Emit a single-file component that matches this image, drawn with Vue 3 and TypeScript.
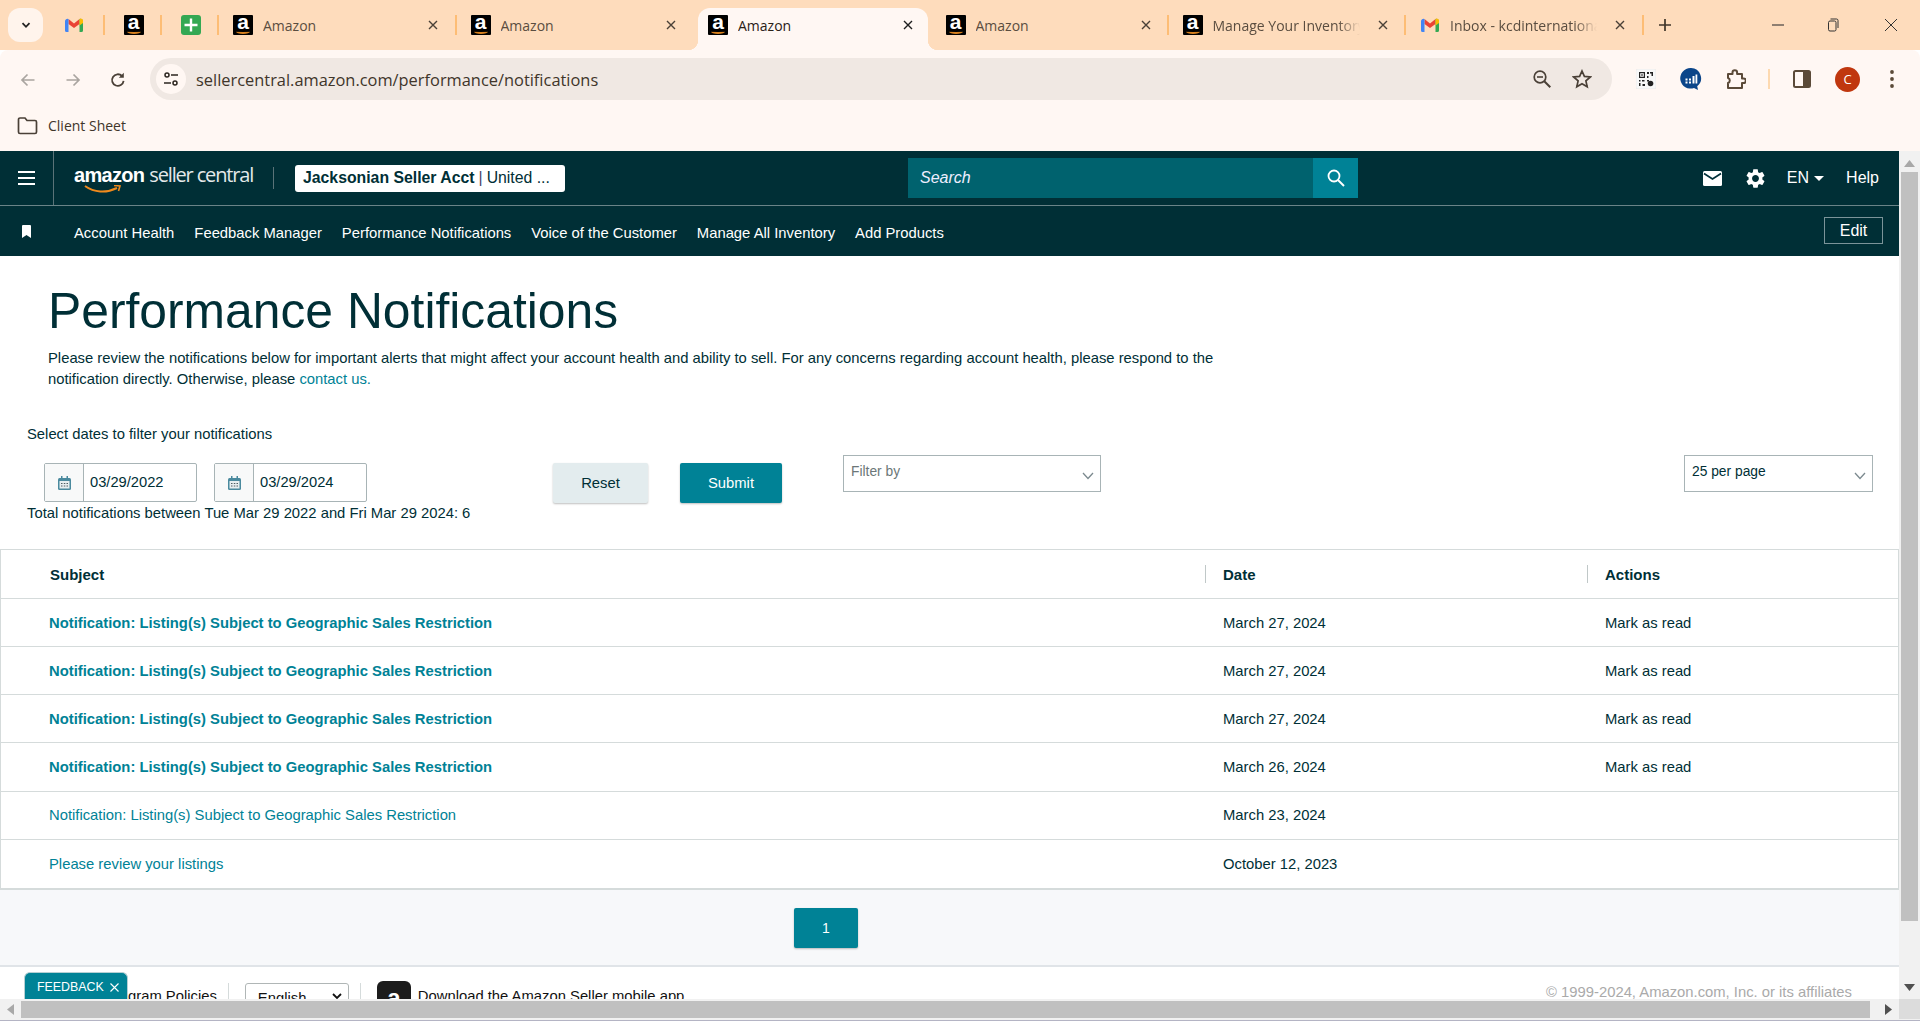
<script setup lang="ts">
interface Tab { kind: string; title?: string; active?: boolean; fade?: boolean }
const tabs: Tab[] = [
  { kind: 'amazon', title: 'Amazon' },
  { kind: 'amazon', title: 'Amazon' },
  { kind: 'amazon', title: 'Amazon', active: true },
  { kind: 'amazon', title: 'Amazon' },
  { kind: 'amazon', title: 'Manage Your Inventory', fade: true },
  { kind: 'gmail', title: 'Inbox - kcdinternational', fade: true },
]
const navLinks = ['Account Health', 'Feedback Manager', 'Performance Notifications', 'Voice of the Customer', 'Manage All Inventory', 'Add Products']
const subject = 'Notification: Listing(s) Subject to Geographic Sales Restriction'
const rows = [
  { subject, date: 'March 27, 2024', action: 'Mark as read', unread: true },
  { subject, date: 'March 27, 2024', action: 'Mark as read', unread: true },
  { subject, date: 'March 27, 2024', action: 'Mark as read', unread: true },
  { subject, date: 'March 26, 2024', action: 'Mark as read', unread: true },
  { subject, date: 'March 23, 2024', action: '', unread: false },
  { subject: 'Please review your listings', date: 'October 12, 2023', action: '', unread: false },
]
const dates = ['03/29/2022', '03/29/2024']
</script>

<template>
  <div class="root">
    <div class="tabstrip">
      <div class="tabmenu">
        <svg width="12" height="12" viewBox="0 0 12 12"><path d="M2.5 4.2 6 7.8l3.5-3.6" fill="none" stroke="#222" stroke-width="1.8" /></svg>
      </div>
      <div class="pinned first">
        <svg class="fav" viewBox="0 0 20 20"><path d="M4.500 4 10 8.500 15.500 4v5L10 13 4.500 9z" fill="#ea4335" /><path d="M1 6.500A2.500 2.500 0 0 1 4.500 4v13H2.500A1.500 1.500 0 0 1 1 15.500z" fill="#4285f4" /><path d="M19 6.500A2.500 2.500 0 0 0 15.500 4v13h2a1.500 1.500 0 0 0 1.500-1.500z" fill="#34a853" /><path d="M15.500 4A2.300 2.300 0 0 1 19 6.500v1.500L15.500 10.500z" fill="#fbbc04" /></svg>
      </div>
      <div class="pinned">
        <div class="amz"><span>a</span><i></i></div>
      </div>
      <div class="pinned">
        <svg class="fav" viewBox="0 0 20 20"><rect width="20" height="20" rx="3" fill="#34a853" /><path d="M8.800 3.500h2.400v5.300h5.300v2.400h-5.300v5.300H8.800v-5.300H3.500V8.800h5.300z" fill="#fff" /></svg>
      </div>
      <div v-for="(t, i) in tabs" :key="i" class="tab" :class="{ active: t.active, afteractive: i === 3, beforeactive: i === 1 }">
        <div v-if="t.kind === 'amazon'" class="amz"><span>a</span><i></i></div>
        <svg v-else class="fav" viewBox="0 0 20 20"><path d="M4.500 4 10 8.500 15.500 4v5L10 13 4.500 9z" fill="#ea4335" /><path d="M1 6.500A2.500 2.500 0 0 1 4.500 4v13H2.500A1.500 1.500 0 0 1 1 15.500z" fill="#4285f4" /><path d="M19 6.500A2.500 2.500 0 0 0 15.500 4v13h2a1.500 1.500 0 0 0 1.500-1.500z" fill="#34a853" /><path d="M15.500 4A2.300 2.300 0 0 1 19 6.500v1.500L15.500 10.500z" fill="#fbbc04" /></svg>
        <span class="tabtitle" :class="{ fade: t.fade }">{{ t.title }}</span>
        <svg class="tabx" width="10" height="10" viewBox="0 0 10 10"><path d="M1 1l8 8M9 1 1 9" stroke="currentColor" stroke-width="1.4" /></svg>
      </div>
      <svg class="plus" width="14" height="14" viewBox="0 0 14 14"><path d="M7 1v12M1 7h12" stroke="#40352a" stroke-width="1.7" /></svg>
      <div class="winctl">
        <svg class="w-min" width="14" height="14" viewBox="0 0 14 14"><path d="M1 7h12" stroke="#333" stroke-width="1.1" /></svg>
        <svg class="w-rest" width="14" height="14" viewBox="0 0 14 14"><rect x="2.500" y="3" width="7.500" height="10" rx="1.500" fill="none" stroke="#333" /><path d="M4.500 1H10.500A1.500 1.500 0 0 1 12 2.500V10" fill="none" stroke="#333" /></svg>
        <svg width="14" height="14" viewBox="0 0 14 14"><path d="M1 1l12 12M13 1 1 13" stroke="#333" stroke-width="1" /></svg>
      </div>
    </div>

    <div class="toolbar">
      <svg class="tb back" viewBox="0 0 18 18"><path d="M15.500 9H3M8.500 3.500 3 9l5.500 5.500" fill="none" stroke="#aaa5a0" stroke-width="1.7" /></svg>
      <svg class="tb" viewBox="0 0 18 18"><path d="M2.500 9H15M9.500 3.500 15 9l-5.500 5.500" fill="none" stroke="#aaa5a0" stroke-width="1.7" /></svg>
      <svg class="tb" viewBox="0 0 18 18"><path d="M14.600 9.800A5.800 5.800 0 1 1 13 5" fill="none" stroke="#4a4037" stroke-width="1.8" /><path d="M14.800 1.800v5h-5z" fill="#4a4037" /></svg>
      <div class="omni">
        <div class="siteinfo">
          <svg width="16" height="16" viewBox="0 0 16 16"><circle cx="4" cy="4" r="2" fill="none" stroke="#2c2620" stroke-width="1.5" /><path d="M8 4h7M1 12h7" stroke="#2c2620" stroke-width="1.6" /><circle cx="12" cy="12" r="2" fill="none" stroke="#2c2620" stroke-width="1.5" /></svg>
        </div>
        <span class="url">sellercentral.amazon.com/performance/notifications</span>
        <svg class="omnizoom" width="20" height="20" viewBox="0 0 20 20"><circle cx="8" cy="8" r="5.800" fill="none" stroke="#4a4037" stroke-width="1.7" /><path d="M5 8h6" stroke="#4a4037" stroke-width="1.6" /><path d="m12.300 12.300 6 6" stroke="#4a4037" stroke-width="2" /></svg>
        <svg class="omnistar" width="20" height="20" viewBox="0 0 20 20"><path d="m10 2 2.400 5.400 5.900.6-4.400 3.900 1.300 5.800L10 14.700l-5.200 3 1.300-5.800L1.700 8l5.900-.6z" fill="none" stroke="#4a4037" stroke-width="1.7" /></svg>
      </div>
      <div class="exts">
        <svg class="ext e-qr" width="20" height="20" viewBox="0 0 20 20"><rect width="20" height="20" rx="2" fill="#f8f8f8" stroke="#e6e6e6" stroke-width=".6" /><path d="M3 3h6v6H3zM4.200 4.200v3.600h3.600V4.200zM5.300 5.300h1.400v1.400H5.300zM11 3h2v2h-2zM14 3h3v4h-1.500V4.500H14zM11 7h1.500v2H11zM3 11h1.500v1.500H3zM6 11h2.500v1.500H6zM3 14h1.500v3H3zM6.500 15H9v2H6.500z" fill="#222" fill-rule="evenodd" /><circle cx="14.500" cy="14.500" r="2.800" fill="#222" /><path d="M11 11h2v1.500h-2z" fill="#222" /></svg>
        <svg class="ext e-chart" width="22" height="22" viewBox="0 0 22 22"><path d="M10.500 0a10.300 10.300 0 1 0 3.500 20l4 2-.8-3.700A10.300 10.300 0 0 0 10.500 0z" fill="#0b4589" /><path d="M5.500 10.500h2v2h-2zM5.500 13.500h2v2h-2zM9 10.500h2v2H9zM9 13.500h2v2H9zM12.500 8h2v7.500h-2zM15.500 6.500h1.800v9h-1.800z" fill="#fff" /></svg>
        <svg class="ext e-puz" width="20" height="20" viewBox="0 0 20 20"><path d="M2 5h4.500V3.500a2.300 2.300 0 0 1 4.600 0V5H16v4.500h1.500a2.300 2.300 0 0 1 0 4.600H16V19H2v-5a2.600 2.600 0 0 0 1.800-2.500A2.600 2.600 0 0 0 2 9z" fill="none" stroke="#5b4a38" stroke-width="2" stroke-linejoin="round" /></svg>
        <div class="extsep"></div>
        <svg class="ext e-panel" width="18" height="18" viewBox="0 0 18 18"><rect x="1" y="1" width="16" height="16" rx="1.500" fill="none" stroke="#5b4a38" stroke-width="2" /><rect x="10" y="1" width="7" height="16" fill="#5b4a38" /></svg>
        <div class="avatar">C</div>
        <svg class="ext e-dots" width="6" height="20" viewBox="0 0 6 20"><circle cx="3" cy="3" r="1.900" fill="#5b4a38" /><circle cx="3" cy="10" r="1.900" fill="#5b4a38" /><circle cx="3" cy="17" r="1.900" fill="#5b4a38" /></svg>
      </div>
    </div>

    <div class="bookmarks">
      <svg width="21" height="18" viewBox="0 0 21 18"><path d="M1.500 2.500A1.500 1.500 0 0 1 3 1h5l2 2.500h8A1.500 1.500 0 0 1 19.500 5v10a1.500 1.500 0 0 1-1.500 1.500H3A1.500 1.500 0 0 1 1.500 15z" fill="none" stroke="#4a4037" stroke-width="1.7" /></svg>
      <span>Client Sheet</span>
    </div>

    <div class="viewport">
      <div class="page">
        <header class="sc-top">
          <div class="burger"><span></span><span></span><span></span></div>
          <div class="logo">
            <span class="logo-amazon">amazon</span><span class="logo-sc">seller central</span>
            <svg class="smile" width="38" height="9" viewBox="0 0 38 9"><path d="M1 1c9 6.500 21 7.500 32 2" fill="none" stroke="#f08a1d" stroke-width="2" /><path d="m30 .5 6 .5-1.500 5" fill="none" stroke="#f08a1d" stroke-width="1.600" /></svg>
          </div>
          <div class="logosep"></div>
          <div class="account"><b>Jacksonian Seller Acct</b><em>|</em><span>United ...</span></div>
          <div class="search">
            <span class="search-text">Search</span>
            <div class="search-btn">
              <svg width="20" height="20" viewBox="0 0 20 20"><circle cx="8" cy="8" r="5.500" fill="none" stroke="#fff" stroke-width="1.800" /><path d="m12 12 6 6" stroke="#fff" stroke-width="2" /></svg>
            </div>
          </div>
          <div class="top-right">
            <svg width="19" height="15" viewBox="0 0 19 15"><rect width="19" height="15" rx="1.500" fill="#fff" /><path d="m1 2.500 8.500 5.500L18 2.500" fill="none" stroke="#00303a" stroke-width="1.700" /></svg>
            <svg class="gear" width="23" height="23" viewBox="0 0 24 24"><path d="M19.140 12.940c.04-.3.06-.61.06-.94 0-.32-.02-.64-.07-.94l2.030-1.580c.18-.14.23-.41.12-.61l-1.920-3.320c-.12-.22-.37-.29-.59-.22l-2.390.96c-.5-.38-1.030-.7-1.620-.94l-.36-2.540c-.04-.24-.24-.41-.48-.41h-3.840c-.24 0-.43.17-.47.41l-.36 2.540c-.59.24-1.130.57-1.620.94l-2.390-.96c-.22-.08-.47 0-.59.22L2.740 8.870c-.12.21-.08.47.12.61l2.030 1.580c-.05.3-.09.63-.09.94s.02.64.07.94l-2.030 1.580c-.18.14-.23.41-.12.61l1.920 3.320c.12.22.37.29.59.22l2.390-.96c.5.38 1.030.7 1.620.94l.36 2.540c.05.24.24.41.48.41h3.840c.24 0 .44-.17.47-.41l.36-2.540c.59-.24 1.130-.56 1.620-.94l2.390.96c.22.08.47 0 .59-.22l1.920-3.320c.12-.22.07-.47-.12-.61l-2.010-1.580zM12 15.600c-1.980 0-3.600-1.620-3.600-3.600s1.620-3.600 3.600-3.600 3.600 1.620 3.600 3.600-1.620 3.600-3.600 3.600z" fill="#fff" /></svg>
            <span class="lang">EN<i></i></span>
            <span class="help">Help</span>
          </div>
        </header>
        <nav class="sc-nav">
          <svg class="mark" width="9" height="13" viewBox="0 0 9 13"><path d="M0 1a1 1 0 0 1 1-1h7a1 1 0 0 1 1 1v12l-4.500-3L0 13z" fill="#fff" /></svg>
          <a v-for="n in navLinks" :key="n">{{ n }}</a>
          <button class="edit">Edit</button>
        </nav>

        <main class="content">
          <div class="intro">
            <h1>Performance Notifications</h1>
            <p>Please review the notifications below for important alerts that might affect your account health and ability to sell. For any concerns regarding account health, please respond to the notification directly. Otherwise, please <a>contact us.</a></p>
          </div>
          <div class="filters">
            <div class="sel-label">Select dates to filter your notifications</div>
            <div class="filter-row">
              <div class="dates">
                <div class="date-pair">
                  <div v-for="d in dates" :key="d" class="date">
                    <div class="cal">
                      <svg width="13" height="14" viewBox="0 0 13 14"><rect y="2" width="13" height="12" rx="1.500" fill="#4a8a9e" /><rect x="1.500" y="5" width="10" height="7.500" fill="#e6eef0" /><path d="M3 0h1.500v3H3zM8.500 0H10v3H8.500z" fill="#4a8a9e" /><path d="M3 7h1.500v1H3zM5.800 7h1.500v1H5.800zM8.500 7H10v1H8.500zM3 9.500h1.500v1H3zM5.800 9.500h1.500v1H5.800zM8.500 9.500H10v1H8.500z" fill="#4f5d62" /></svg>
                    </div>
                    <div class="date-val">{{ d }}</div>
                  </div>
                </div>
                <div class="total">Total notifications between Tue Mar 29 2022 and Fri Mar 29 2024: 6</div>
              </div>
              <button class="btn reset">Reset</button>
              <button class="btn submit">Submit</button>
              <div class="drop filter">
                <span>Filter by</span>
                <svg width="12" height="8" viewBox="0 0 12 8"><path d="m1 1 5 5.500L11 1" fill="none" stroke="#7c8a8f" stroke-width="1.300" /></svg>
              </div>
              <div class="drop perpage">
                <span>25 per page</span>
                <svg width="12" height="8" viewBox="0 0 12 8"><path d="m1 1 5 5.500L11 1" fill="none" stroke="#7c8a8f" stroke-width="1.300" /></svg>
              </div>
            </div>
          </div>

          <div class="table">
            <div class="thead row">
              <div class="c1">Subject</div>
              <div class="c2"><i></i>Date</div>
              <div class="c3"><i></i>Actions</div>
            </div>
            <div v-for="(r, i) in rows" :key="i" class="row body">
              <div class="c1"><a :class="{ unread: r.unread }">{{ r.subject }}</a></div>
              <div class="c2">{{ r.date }}</div>
              <div class="c3">{{ r.action }}</div>
            </div>
          </div>
          <div class="pager"><button class="pagebtn">1</button></div>
        </main>

        <footer class="footer">
          <span class="f-prog">Program Policies</span>
          <div class="f-sep"></div>
          <div class="f-lang">English<svg width="10" height="7" viewBox="0 0 10 7"><path d="m1 1 4 4 4-4" fill="none" stroke="#111" stroke-width="1.800" /></svg></div>
          <div class="f-sep"></div>
          <div class="f-app"><div class="amz big"><span>a</span></div></div>
          <span class="f-dl">Download the Amazon Seller mobile app</span>
          <span class="f-copy">© 1999-2024, Amazon.com, Inc. or its affiliates</span>
        </footer>
        <div class="feedback">FEEDBACK<svg width="9" height="9" viewBox="0 0 9 9"><path d="m.5.5 8 8M8.500.5l-8 8" stroke="#fff" stroke-width="1.100" /></svg></div>
      </div>

      <div class="vbar">
        <svg width="11" height="7" viewBox="0 0 11 7"><path d="M5.500 0 11 7H0z" fill="#a8a8a8" /></svg>
        <div class="vthumb"></div>
        <svg width="11" height="7" viewBox="0 0 11 7"><path d="M5.500 7 11 0H0z" fill="#505050" /></svg>
      </div>
      <div class="hbar">
        <svg width="7" height="11" viewBox="0 0 7 11"><path d="M0 5.500 7 0v11z" fill="#a8a8a8" /></svg>
        <div class="hthumb"></div>
        <svg width="7" height="11" viewBox="0 0 7 11"><path d="M7 5.500 0 0v11z" fill="#505050" /></svg>
      </div>
      <div class="corner"></div>
    </div>
    <div class="winedge"></div>
  </div>
</template>

<style>
html, body { margin: 0; padding: 0; overflow: hidden; background: #fff; }
</style>

<style scoped>
.root { width: 1920px; height: 1021px; display: flex; flex-direction: column; overflow: hidden; font-family: "Liberation Sans", Arial, sans-serif; color: #002f36; }

.tabstrip { height: 50px; flex: none; background: #fedcbc; display: flex; align-items: flex-start; padding-left: 8px; box-sizing: border-box; }
.tabmenu { width: 35px; height: 34px; margin-top: 8px; border-radius: 12px; background: #fff4ec; display: flex; align-items: center; justify-content: center; }
.pinned { width: 57px; height: 32px; margin-top: 9px; display: flex; align-items: center; justify-content: center; flex: none; position: relative; }
.pinned::after { content: ""; position: absolute; right: 0; top: 6px; height: 20px; width: 2px; background: #fdbd75; }
.pinned.first { width: 62px; }
.fav { width: 20px; height: 20px; flex: none; display: block; }
.amz { width: 20px; height: 20px; background: #000; flex: none; position: relative; border-radius: 1px; }
.amz span { position: absolute; left: 0; right: 0; top: -4px; text-align: center; color: #fff; font: 700 21px/22px "Liberation Sans", sans-serif; }
.amz i { position: absolute; left: 3px; right: 3px; bottom: 1px; height: 3px; border-bottom: 2px solid #d9821f; border-radius: 0 0 50% 50%; }
.tab { width: 237.500px; height: 42px; margin-top: 8px; box-sizing: border-box; padding: 0 10px 0 14px; display: flex; align-items: center; position: relative; flex: none; color: #5a4d40; font: 14px "Open Sans", sans-serif; }
.tab::after { content: ""; position: absolute; right: 0; top: 7px; height: 20px; width: 2px; background: #fdbd75; }
.tab .fav, .tab .amz { margin-top: -8px; }
.tabtitle { margin-left: 10px; width: 147px; white-space: nowrap; overflow: hidden; margin-top: -8px; flex: none; }
.tabtitle.fade { -webkit-mask-image: linear-gradient(90deg, #000 85%, transparent); mask-image: linear-gradient(90deg, #000 85%, transparent); }
.tabx { margin-left: 18px; margin-top: -8px; flex: none; color: #4a4037; }
.tab.beforeactive::after { display: none; }
.tab.active { width: 229.500px; margin-left: 4px; margin-right: 4px; padding-left: 10px; background: #fff7f3; border-radius: 12px 12px 0 0; color: #2a2118; }
.tab.active .tabx { color: #1e1e1e; }
.tab.active::before, .tab.active::after { content: ""; position: absolute; bottom: 0; top: auto; width: 10px; height: 10px; }
.tab.active::before { left: -10px; background: radial-gradient(circle at 0 0, transparent 10px, #fff7f3 10.500px); }
.tab.active::after { right: -10px; background: radial-gradient(circle at 100% 0, transparent 10px, #fff7f3 10.500px); }
.tab.afteractive { width: 237px; }
.plus { margin: 18px 0 0 14px; flex: none; }
.winctl { margin-left: auto; margin-top: 18px; display: flex; padding-right: 22px; }
.w-min { margin-right: 41px; }
.w-rest { margin-right: 44px; }

.toolbar { flex: none; background: #fff7f3; display: flex; align-items: center; border-radius: 8px 8px 0 0; padding-top: 8px; height: 42px; position: relative; }
.tb { width: 18px; height: 18px; flex: none; margin-left: 27px; margin-top: 1px; }
.tb.back { margin-left: 19px; }
.omni { margin-left: 23px; width: 1462px; height: 42px; border-radius: 21px; background: #f0e8e3; display: flex; align-items: center; padding-left: 6px; box-sizing: border-box; flex: none; }
.siteinfo { width: 30px; height: 30px; border-radius: 50%; background: #fff7f3; display: flex; align-items: center; justify-content: center; flex: none; }
.url { margin-left: 10px; margin-top: 1px; font: 16.400px "Open Sans", sans-serif; color: #40352a; flex: 1; white-space: nowrap; }
.omnizoom { flex: none; margin-right: 20px; }
.omnistar { flex: none; margin-right: 20px; }
.exts { display: flex; align-items: center; }
.ext { flex: none; display: block; }
.e-qr { margin-left: 24px; }
.e-chart { margin-left: 24px; }
.e-puz { margin-left: 24px; }
.extsep { width: 2px; height: 20px; background: #fdd9b0; margin-left: 22px; flex: none; }
.e-panel { margin-left: 23px; }
.avatar { width: 25px; height: 25px; border-radius: 50%; background: #c0370e; color: #fff; font: 13px/25px "Open Sans", sans-serif; text-align: center; margin-left: 24px; flex: none; }
.e-dots { margin-left: 29px; }

.bookmarks { height: 51px; flex: none; background: #fff7f3; display: flex; align-items: center; padding: 0 0 0 17px; gap: 10px; font: 14px "Open Sans", sans-serif; color: #40352a; }

.viewport { flex: 1; min-height: 0; display: grid; grid-template-columns: 1fr 21px; grid-template-rows: 1fr 20px; }
.page { position: relative; overflow: hidden; min-width: 0; min-height: 0; display: flex; flex-direction: column; }

.sc-top { height: 55px; flex: none; background: #002f36; border-bottom: 1px solid #6a8488; box-sizing: border-box; display: flex; align-items: center; color: #fff; }
.burger { width: 53px; height: 100%; border-right: 1px solid #5a7378; display: flex; flex-direction: column; justify-content: center; align-items: flex-start; gap: 4px; flex: none; }
.burger span { display: block; width: 17px; height: 2px; background: #fff; margin-left: 18px; }
.logo { margin-left: 20px; width: 180px; position: relative; white-space: nowrap; height: 36px; line-height: 30px; flex: none; }
.logo-amazon { font: 700 20px/30px "Liberation Sans", sans-serif; letter-spacing: -0.700px; }
.logo-sc { font: 400 20px/30px "Open Sans", sans-serif; letter-spacing: -1.150px; margin-left: 5px; color: #e4e9ea; }
.smile { position: absolute; left: 10px; top: 25px; }
.logosep { width: 1px; height: 22px; background: #5a7378; margin-left: 19px; flex: none; }
.account { margin-left: 21px; width: 270px; height: 27px; background: #fff; border-radius: 3px; color: #002f36; font-size: 15.800px; line-height: 26px; box-sizing: border-box; padding-left: 8px; white-space: nowrap; overflow: hidden; flex: none; }
.account em { font-style: normal; margin: 0 4px; color: #446; }
.search { margin-left: 343px; width: 450px; height: 40px; background: #00626e; display: flex; flex: none; align-items: center; }
.search-text { flex: 1; font-style: italic; font-size: 16px; padding-left: 12px; color: #eef; }
.search-btn { width: 45px; height: 40px; background: #008296; display: flex; align-items: center; justify-content: center; }
.top-right { margin-left: auto; display: flex; align-items: center; padding-right: 20px; }
.gear { margin-left: 22px; }
.lang { margin-left: 20px; font-size: 16px; display: flex; align-items: center; }
.lang i { width: 0; height: 0; border-left: 5px solid transparent; border-right: 5px solid transparent; border-top: 5px solid #fff; margin-left: 5px; }
.help { margin-left: 22px; font-size: 16px; }

.sc-nav { height: 50px; box-sizing: border-box; padding-top: 3px; flex: none; background: #002f36; display: flex; align-items: center; color: #fff; font-size: 14.800px; padding-left: 22px; position: relative; }
.mark { margin-right: 43px; margin-top: -2px; }
.sc-nav a { margin-right: 20px; white-space: nowrap; }
.edit { margin-left: auto; margin-right: 16px; margin-top: -4px; width: 59px; height: 27px; border: 1px solid #7b9499; background: transparent; color: #fff; font: 16px "Liberation Sans", sans-serif; padding: 0; }

.content { flex: none; background: #fff; }
.intro { padding: 22px 0 0 48px; }
h1 { margin: 0; font-weight: 400; font-size: 49.800px; line-height: 66px; color: #002f36; }
.intro p { margin: 4px 0 0; width: 1190px; font-size: 14.800px; line-height: 21px; color: #002f36; }
.intro a { color: #008296; }
.filters { padding: 34px 0 0 27px; height: 159px; box-sizing: border-box; }
.sel-label { font-size: 14.800px; line-height: 20px; }
.filter-row { display: flex; align-items: flex-start; margin-top: 19px; position: relative; }
.dates { width: 526px; flex: none; }
.date-pair { display: flex; gap: 17px; margin-left: 17px; }
.date { width: 153px; height: 39px; box-sizing: border-box; border: 1px solid #a8b4b6; border-radius: 2px; display: flex; }
.cal { width: 38px; background: #f8f9f9; border-right: 1px solid #a8b4b6; display: flex; align-items: center; justify-content: center; flex: none; }
.date-val { padding-left: 6px; font-size: 14.700px; line-height: 37px; color: #002f36; }
.total { font-size: 14.800px; line-height: 20px; margin-top: 1px; white-space: nowrap; }
.btn { height: 40px; border: none; border-radius: 2px; font: 14.800px "Liberation Sans", sans-serif; box-shadow: 0 1px 2px rgba(0, 0, 0, .25); flex: none; padding: 0; }
.reset { width: 95px; background: #e3ecee; color: #002f36; }
.submit { width: 102px; background: #008296; color: #fff; margin-left: 32px; }
.drop { height: 37px; box-sizing: border-box; border: 1px solid #a8b4b6; display: flex; align-items: center; justify-content: space-between; padding: 0 6px 0 7px; font-size: 13.800px; flex: none; margin-top: -8px; }
.drop span { margin-top: -4px; }
.drop svg { margin-top: 4px; }
.filter { width: 258px; margin-left: 61px; color: #6c7778; }
.perpage { width: 189px; margin-left: auto; margin-right: 26px; color: #002f36; }

.table { background: #fff; border: solid #d5dbdb; border-width: 1px 1px 2px 1px; box-sizing: border-box; }
.row { display: grid; grid-template-columns: 1204px 382px 1fr; align-items: center; font-size: 14.800px; box-sizing: border-box; border-bottom: 1px solid #d5dbdb; }
.thead { height: 49px; font-weight: 700; font-size: 15px; padding-top: 1px; }
.thead .c1 { padding-left: 49px; }
.body { height: 48.170px; }
.body:last-child { border-bottom: none; }
.row > div { position: relative; }
.c1 { padding-left: 48px; }
.c2, .c3 { padding-left: 18px; }
.thead i { position: absolute; left: 0; top: -1px; height: 18px; width: 1px; background: #c0c8c8; }
.c1 a { color: #008296; }
.c1 a.unread { font-weight: 700; }
.pager { height: 77px; background: #f7f8fa; border-bottom: 2px solid #e0e4e8; padding: 18px 0 0 794px; box-sizing: border-box; }
.pagebtn { width: 64px; height: 40px; border: none; border-radius: 2px; background: #008296; color: #fff; font: 14px "Liberation Sans", sans-serif; padding: 0; box-shadow: 0 1px 2px rgba(0, 0, 0, .25); }

.footer { height: 60px; flex: none; display: flex; align-items: flex-start; background: #fff; font-size: 14.800px; color: #111; padding-top: 16px; box-sizing: border-box; white-space: nowrap; position: relative; }
.f-prog { margin-left: 105px; line-height: 20px; margin-top: 3px; }
.f-sep { width: 1px; height: 26px; background: #d5dbdb; margin-left: 11px; flex: none; }
.f-lang { width: 104px; height: 26px; margin-left: 16px; box-sizing: border-box; border: 1px solid #b0b6b6; border-radius: 3px; padding: 6px 0 0 12px; display: flex; justify-content: space-between; }
.f-lang svg { margin: 3px 6px 0 0; }
.f-app { margin-left: 16px; margin-top: -2px; }
.amz.big { width: 34px; height: 34px; border-radius: 6px; background: #1c1c1c; }
.amz.big span { font-size: 24px; line-height: 34px; top: 0; }
.f-dl { margin-left: 7px; line-height: 20px; margin-top: 3px; }
.f-copy { position: absolute; right: 47px; top: 17px; font-size: 14.800px; color: #aaa; }
.feedback { position: absolute; left: 24px; top: 821px; width: 104px; height: 40px; background: #008296; color: #fff; border-radius: 6px 6px 0 0; font-size: 12.400px; box-sizing: border-box; padding: 7px 0 0 12px; display: flex; gap: 6px; border: 1px solid #b6cfd3; border-bottom: none; }
.feedback svg { margin-top: 3px; }

.vbar { background: #f1f1f1; display: flex; flex-direction: column; align-items: center; grid-row: 1; grid-column: 2; }
.vbar svg:first-child { margin-top: 9px; }
.vbar svg:last-child { margin-top: 63px; }
.vthumb { width: 17px; height: 749px; background: #c0c0c0; margin-top: 5px; flex: none; }
.hbar { background: #f1f1f1; display: flex; align-items: center; grid-row: 2; grid-column: 1; }
.hbar svg:first-child { margin-left: 7px; }
.hthumb { width: 1849px; height: 17px; background: #c0c0c0; margin-left: 7px; flex: none; }
.hbar svg:last-child { margin-left: 15px; }
.corner { background: #dcdcdc; grid-row: 2; grid-column: 2; }
.winedge { height: 2px; flex: none; background: #f1f1f1; border-bottom: 1px solid #b4b4c4; box-sizing: border-box; }
</style>
